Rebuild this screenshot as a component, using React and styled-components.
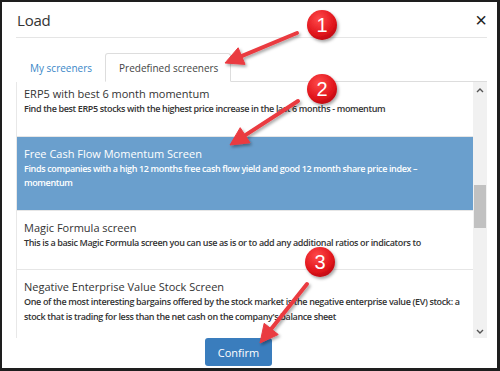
import React from "react";
import styled, { createGlobalStyle } from "styled-components";

const GlobalStyle = createGlobalStyle`
  html, body {
    margin: 0;
    padding: 0;
    background: #fff;
  }
  body {
    font-family: "Open Sans", "Liberation Sans", sans-serif;
    color: #333;
  }
`;

const screeners = [
  {
    title: "ERP5 with best 6 month momentum",
    text: "Find the best ERP5 stocks with the highest price increase in the last 6 months - momentum",
  },
  {
    title: "Free Cash Flow Momentum Screen",
    text: "Finds companies with a high 12 months free cash flow yield and good 12 month share price index – momentum",
    selected: true,
  },
  {
    title: "Magic Formula screen",
    text: "This is a basic Magic Formula screen you can use as is or to add any additional ratios or indicators to",
  },
  {
    title: "Negative Enterprise Value Stock Screen",
    text: "One of the most interesting bargains offered by the stock market is the negative enterprise value (EV) stock: a stock that is trading for less than the net cash on the company's balance sheet",
  },
];

// callouts drawn on top of the screenshot
const markers = [
  { n: 1, cx: 322, cy: 25, from: [297, 33], to: [225, 63] },
  { n: 2, cx: 322, cy: 89, from: [298, 101], to: [230, 145] },
  { n: 3, cx: 320, cy: 262, from: [307, 284], to: [260, 343] },
];

function arrowPoints(from, to) {
  const [x1, y1] = from;
  const [x2, y2] = to;
  const len = Math.hypot(x2 - x1, y2 - y1);
  const ux = (x2 - x1) / len;
  const uy = (y2 - y1) / len;
  const headLen = 18;
  const half = 9;
  const bx = x2 - ux * headLen;
  const by = y2 - uy * headLen;
  return {
    line: [x1, y1, bx + ux * 2, by + uy * 2],
    head: `${x2},${y2} ${bx - uy * half},${by + ux * half} ${bx + uy * half},${by - ux * half}`,
  };
}

export default function App() {
  return (
    <>
      <GlobalStyle />
      <Frame>
        <Header>
          <Title>Load</Title>
          <Close>×</Close>
        </Header>
        <Body>
          <Tabs>
            <Tab>My screeners</Tab>
            <Tab active>Predefined screeners</Tab>
          </Tabs>
          <ListBox>
            <Viewport>
              <Items>
                {screeners.map((s) => (
                  <Item key={s.title} selected={s.selected}>
                    <ItemTitle>{s.title}</ItemTitle>
                    <ItemText>{s.text}</ItemText>
                  </Item>
                ))}
              </Items>
            </Viewport>
            <ScrollBar>
              <ScrollArrow>
                <svg width="8" height="6" viewBox="0 0 8 6">
                  <path d="M1 5 L4 2 L7 5" fill="none" stroke="#555" strokeWidth="1.4" />
                </svg>
              </ScrollArrow>
              <Track>
                <Thumb />
              </Track>
              <ScrollArrow down>
                <svg width="8" height="6" viewBox="0 0 8 6">
                  <path d="M1 1 L4 4 L7 1" fill="none" stroke="#555" strokeWidth="1.4" />
                </svg>
              </ScrollArrow>
            </ScrollBar>
          </ListBox>
          <Footer>
            <ConfirmButton>Confirm</ConfirmButton>
          </Footer>
        </Body>
        <Overlay width="500" height="371" viewBox="0 0 500 371">
          <defs>
            <filter id="shadow" x="-30%" y="-30%" width="160%" height="160%">
              <feDropShadow dx="1.5" dy="2" stdDeviation="1.5" floodColor="#000" floodOpacity="0.35" />
            </filter>
            <radialGradient id="bubble" cx="40%" cy="30%" r="75%">
              <stop offset="0%" stopColor="#ff4a4a" />
              <stop offset="70%" stopColor="#e0141b" />
              <stop offset="100%" stopColor="#b80a10" />
            </radialGradient>
          </defs>
          {markers.map((m) => {
            const a = arrowPoints(m.from, m.to);
            return (
              <g key={m.n}>
                <g filter="url(#shadow)">
                  <line
                    x1={a.line[0]}
                    y1={a.line[1]}
                    x2={a.line[2]}
                    y2={a.line[3]}
                    stroke="#ea3a41"
                    strokeWidth="4"
                    strokeLinecap="round"
                  />
                  <polygon points={a.head} fill="#ea3a41" strokeLinejoin="round" stroke="#ea3a41" strokeWidth="1" />
                </g>
                <circle cx={m.cx} cy={m.cy} r="15" fill="url(#bubble)" filter="url(#shadow)" />
                <text
                  x={m.cx}
                  y={m.cy + 7}
                  textAnchor="middle"
                  fontFamily="Liberation Sans, Arial, sans-serif"
                  fontSize="20"
                  fill="#fff"
                >
                  {m.n}
                </text>
              </g>
            );
          })}
        </Overlay>
      </Frame>
    </>
  );
}

const Frame = styled.div`
  position: relative;
  width: 500px;
  height: 371px;
  box-sizing: border-box;
  border-style: solid;
  border-color: #1e1e1e;
  border-width: 2px 3px 3px 2px;
  background: #fff;
  display: flex;
  flex-direction: column;
  overflow: hidden;
`;

const Header = styled.div`
  height: 35px;
  margin: 0 10px 0 14px;
  border-bottom: 1px solid #e5e5e5;
  display: flex;
  align-items: center;
  justify-content: space-between;
`;

const Title = styled.div`
  font-size: 15px;
  letter-spacing: -0.2px;
  color: #333;
  padding-left: 1px;
`;

const Close = styled.div`
  font-family: "Liberation Sans", Arial, sans-serif;
  font-size: 20px;
  line-height: 1;
  color: #222;
`;

const Body = styled.div`
  flex: 1;
  display: flex;
  flex-direction: column;
  padding: 15px 10px 0 14px;
`;

const Tabs = styled.div`
  display: flex;
  border-bottom: 1px solid #ddd;
`;

const Tab = styled.div`
  height: 27px;
  padding: 0 12px 0 13px;
  margin-bottom: -1px;
  display: flex;
  align-items: center;
  font-size: 10px;
  color: ${(p) => (p.active ? "#444" : "#3a87c8")};
  background: #fff;
  border: 1px solid ${(p) => (p.active ? "#ddd" : "transparent")};
  border-bottom-color: ${(p) => (p.active ? "#fff" : "transparent")};
  border-radius: 3px 3px 0 0;
`;

const ListBox = styled.div`
  height: 256px;
  display: flex;
  border-left: 1px solid #e8e8e8;
`;

const Viewport = styled.div`
  flex: 1;
  overflow: hidden;
`;

const Items = styled.div`
  margin-top: -5px;
`;

const Item = styled.div`
  padding: 9px 11px 19px 7px;
  border-top: 1px solid #e6e6e6;
  background: ${(p) => (p.selected ? "#6a9fcd" : "#fff")};
  color: ${(p) => (p.selected ? "#fff" : "#333")};
  &:first-child {
    border-top: 0;
  }
`;

const ItemTitle = styled.div`
  font-size: 11px;
  line-height: 16px;
`;

const ItemText = styled.div`
  font-size: 9px;
  font-weight: 600;
  letter-spacing: -0.36px;
  line-height: 14.5px;
`;

const ScrollBar = styled.div`
  width: 14px;
  background: #f1f1f1;
  display: flex;
  flex-direction: column;
`;

const ScrollArrow = styled.div`
  height: ${(p) => (p.down ? 12 : 16)}px;
  display: flex;
  align-items: center;
  justify-content: center;
`;

const Track = styled.div`
  flex: 1;
  padding-top: 87px;
`;

const Thumb = styled.div`
  height: 43px;
  margin: 0 1px;
  background: #c1c1c1;
`;

const Footer = styled.div`
  display: flex;
  justify-content: center;
`;

const ConfirmButton = styled.button`
  width: 67px;
  height: 28px;
  border: 0;
  border-radius: 3px;
  background: #3a7dbd;
  color: #fff;
  font-family: "Open Sans", "Liberation Sans", sans-serif;
  font-size: 11px;
  padding: 0;
  margin-right: 26px;
`;

const Overlay = styled.svg`
  position: absolute;
  left: -2px;
  top: -2px;
  pointer-events: none;
`;
